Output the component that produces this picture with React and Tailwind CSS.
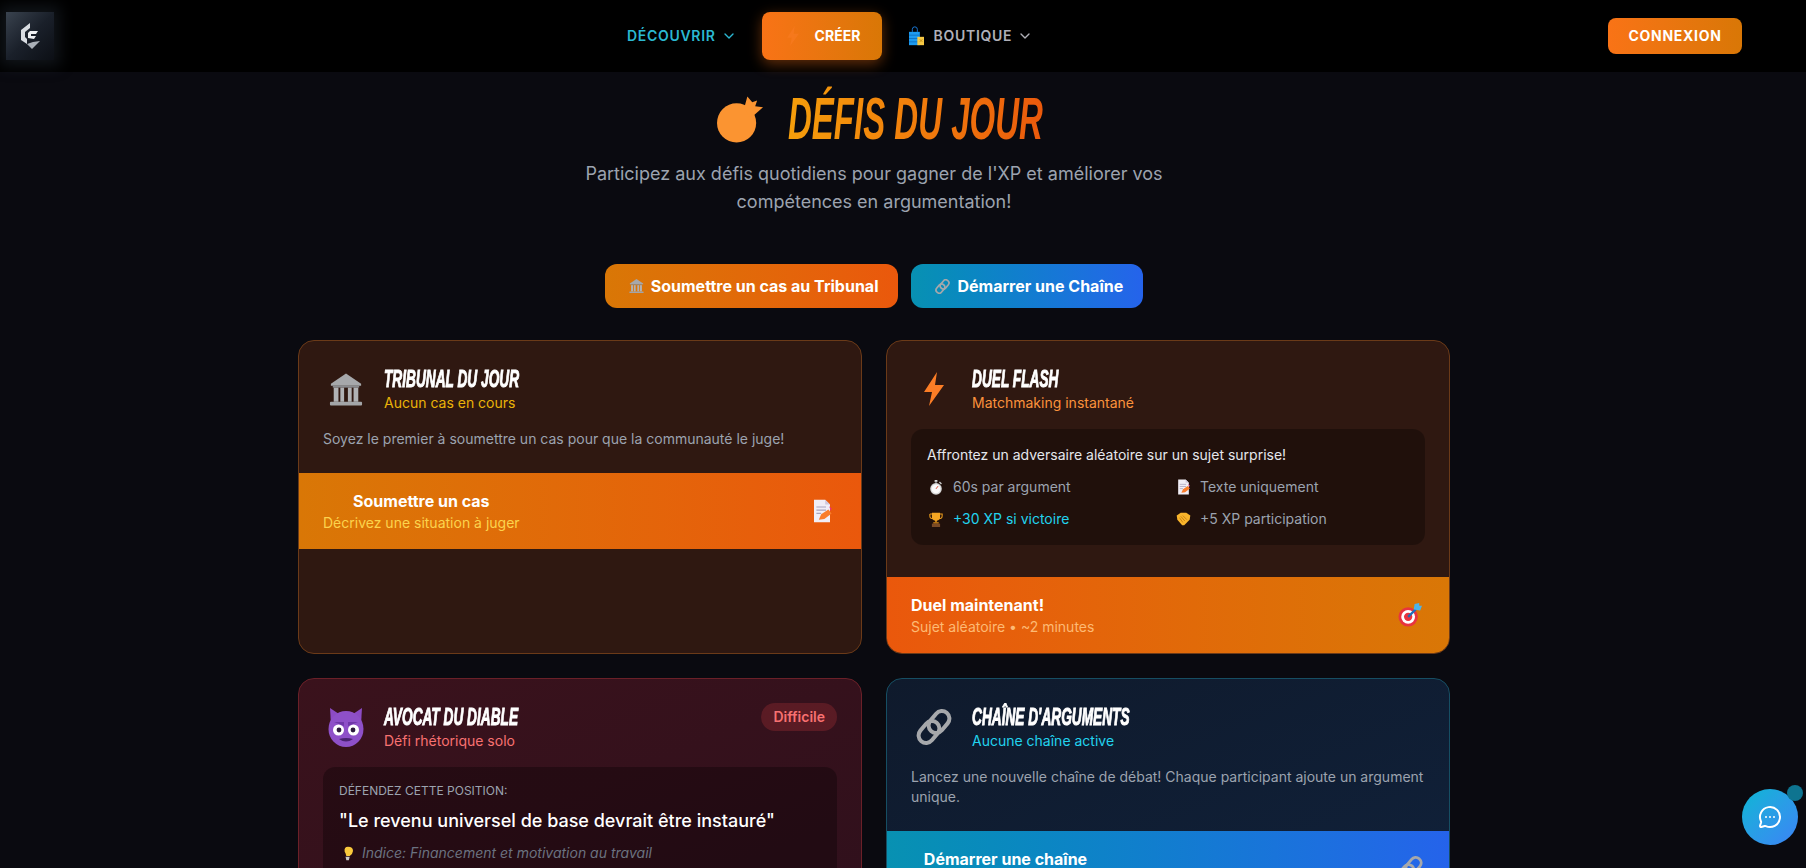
import React from 'react';
import { ChevronDown, MessageCircleMore } from 'lucide-react';

// emoji drawings
const Bolt = ({ className }) => (
  <svg viewBox="0 0 24 36" className={className}>
    <path d="M15 1 L2 21 L10 21 L7 35 L22 14 L13 14 Z" fill="#fb7d26" />
  </svg>
);

const Building = ({ className }) => (
  <svg viewBox="0 0 36 36" className={className}>
    <path d="M18 1 L34 12 L34 14 L2 14 L2 12 Z" fill="#a6a8ab" />
    <rect x="4" y="14" width="28" height="2" fill="#8a8c90" />
    <rect x="5" y="16" width="5" height="15" fill="#b0b2b5" />
    <rect x="12" y="16" width="4" height="15" fill="#b0b2b5" />
    <rect x="20" y="16" width="4" height="15" fill="#b0b2b5" />
    <rect x="26" y="16" width="5" height="15" fill="#b0b2b5" />
    <rect x="1" y="31" width="34" height="4" rx="1" fill="#a3a5a8" />
  </svg>
);

const Memo = ({ className }) => (
  <svg viewBox="0 0 24 30" className={className}>
    <path d="M2 1 H16 L22 7 V29 H2 Z" fill="#f1eef6" />
    <path d="M16 1 L22 7 H16 Z" fill="#cfc8dc" />
    <path d="M5 10 H17 M5 14 H17 M5 18 H11" stroke="#a9a3bd" strokeWidth="1.5" />
    <path d="M8 26 L11 19 L20 13 L24 18 L15 25 Z" fill="#f97c2b" />
    <path d="M21 9 L24 12 L23 15 Z" fill="#ec2f7b" />
  </svg>
);

const Bag = ({ className }) => (
  <svg viewBox="0 0 20 24" className={className}>
    <path d="M5 7 V4 Q5 1 8 1 Q11 1 11 4 V7" fill="none" stroke="#1976d2" strokeWidth="1.2" />
    <rect x="1" y="7" width="13" height="16" fill="#1d9bf0" />
    <path d="M1 11 H14 M1 15 H14 M1 19 H14" stroke="#0d6ebd" strokeWidth="1" />
    <rect x="11" y="13" width="8" height="10" fill="#f6c945" />
    <path d="M14 16 L17 19 M17 16 L14 19" stroke="#b98612" strokeWidth="1" />
  </svg>
);

const Stopwatch = ({ className }) => (
  <svg viewBox="0 0 20 22" className={className}>
    <rect x="8" y="0" width="4" height="3" fill="#d8d8d8" />
    <rect x="9" y="2" width="2" height="3" fill="#8f8f8f" />
    <circle cx="10" cy="13" r="8.5" fill="#d9d9d9" />
    <circle cx="10" cy="13" r="6.5" fill="#fafafa" />
    <path d="M10 13 L13 9" stroke="#d9432f" strokeWidth="1.4" />
    <path d="M15 3 L18 6" stroke="#c9c9c9" strokeWidth="2" />
  </svg>
);

const Trophy = ({ className }) => (
  <svg viewBox="0 0 20 22" className={className}>
    <path d="M1 3 H19 V6 Q19 10 14 10 M1 3 V6 Q1 10 6 10" fill="none" stroke="#e99a1c" strokeWidth="1.6" />
    <path d="M4 1 H16 V7 Q16 12 11 13 V15 H9 V13 Q4 12 4 7 Z" fill="#f5a623" />
    <rect x="6" y="15" width="8" height="2" fill="#d98a14" />
    <rect x="4" y="17" width="12" height="5" fill="#7a4a25" />
  </svg>
);

const Handshake = ({ className }) => (
  <svg viewBox="0 0 22 20" className={className}>
    <path d="M1 5 L7 1 H15 L21 5 L20 11 L12 19 H9 L2 11 Z" fill="#f9b52c" />
    <path d="M7 6 L13 13 M10 5 L16 11 M5 8 L10 15" stroke="#c97f10" strokeWidth="1.3" />
  </svg>
);

const Target = ({ className }) => (
  <svg viewBox="0 0 26 26" className={className}>
    <circle cx="11" cy="15" r="10.5" fill="#e8343f" />
    <circle cx="11" cy="15" r="7.5" fill="#fff" />
    <circle cx="11" cy="15" r="4.5" fill="#e8343f" />
    <path d="M11 15 L21 5" stroke="#1e6fb8" strokeWidth="2.4" />
    <path d="M17 7 L18 1 L23 0 L23 3 L26 3 L24 8 Z" fill="#4db3e8" />
  </svg>
);

const Devil = ({ className }) => (
  <svg viewBox="0 0 36 40" className={className}>
    <path d="M3 18 L2 1 L14 9 Z" fill="#8c4bc4" />
    <path d="M33 18 L34 1 L22 9 Z" fill="#8c4bc4" />
    <ellipse cx="18" cy="22" rx="17.5" ry="18" fill="#8e50c8" />
    <path d="M6 15 L16 19 L16 15 Z M30 15 L20 19 L20 15 Z" fill="#6f37a8" />
    <circle cx="10.5" cy="23" r="5.5" fill="#fff" />
    <circle cx="25.5" cy="23" r="5.5" fill="#fff" />
    <circle cx="11" cy="23" r="2.4" fill="#2c1a3e" />
    <circle cx="25" cy="23" r="2.4" fill="#2c1a3e" />
    <path d="M11 32 Q18 37 25 32 Q18 30 11 32 Z" fill="#4b2372" />
  </svg>
);

const LinkIcon = ({ className }) => (
  <svg viewBox="0 0 36 36" className={className} fill="none" stroke="#a6a8ab" strokeWidth="4">
    <rect x="-7.5" y="-12" width="15" height="24" rx="7.5" transform="translate(23 13) rotate(40)" />
    <rect x="-7.5" y="-12" width="15" height="24" rx="7.5" transform="translate(13 23) rotate(40)" />
  </svg>
);

const Bulb = ({ className }) => (
  <svg viewBox="0 0 14 18" className={className}>
    <path d="M7 1 Q13 1 13 6 Q13 9 9 12 L5 12 Q4 8 3 7 Q2 1 7 1 Z" fill="#f9c93c" />
    <path d="M4 13 L9 13 L8 17 L5 17 Z" fill="#c9c9c9" />
  </svg>
);

const Bomb = ({ className }) => (
  <svg viewBox="0 0 48 48" className={className}>
    <circle cx="20" cy="28" r="20" fill="#fb9431" />
    <path d="M28 12 L31 1 L36 7 L41 5 L39 11 L47 12 L38 20 L33 22 Z" fill="#fb9431" />
  </svg>
);

const Logo = () => (
  <div className="w-12 h-12 bg-gradient-to-br from-[#3a434f] via-[#1a202a] to-[#0c0f15] shadow-[0_0_14px_6px_rgba(50,60,75,0.35)] flex items-center justify-center">
    <svg viewBox="0 0 24 28" className="w-[24px] h-[28px]">
      <path d="M12 1 L3 8 V18 L9 22 L9 17 L7 15 V10 L12 6 Z" fill="#d9dde2" />
      <path d="M12 9 L20 9 L18 12 L13 12 L13 14 L18 14 L16 17 L10 16 V11 Z" fill="#eef0f2" />
      <path d="M9 22 L14 27 L22 19 L15 20 Z" fill="#aab0b8" />
    </svg>
  </div>
);

const CardTitle = ({ children }) => (
  <h3 className="font-['Liberation_Sans',sans-serif] font-bold italic uppercase text-[24px] leading-[28px] text-white [-webkit-text-stroke:1px_white] whitespace-nowrap origin-left scale-x-[0.57]">
    {children}
  </h3>
);

const CardHeader = ({ icon, title, subtitle, subColor, badge }) => (
  <div className="flex items-center gap-4 mb-4">
    <div className="w-[45px] h-[48px] flex items-center justify-center shrink-0">{icon}</div>
    <div className="flex-1">
      <CardTitle>{title}</CardTitle>
      <p className={`text-sm leading-5 ${subColor}`}>{subtitle}</p>
    </div>
    {badge}
  </div>
);

const CtaBar = ({ title, subtitle, subColor = '', gradient, icon, center }) => (
  <div className={`flex items-center justify-between px-6 py-4 h-[76px] shrink-0 ${gradient}`}>
    <div className={center ? 'text-center min-w-[189px]' : ''}>
      <div className="text-base leading-6 font-bold text-white">{title}</div>
      <div className={`text-sm leading-5 min-h-5 whitespace-nowrap ${subColor}`}>{subtitle}</div>
    </div>
    <div className="w-[30px] flex justify-center">{icon}</div>
  </div>
);

const Stat = ({ icon, text, color = 'text-[#9ca3af]' }) => (
  <div className="flex items-center gap-2 text-sm leading-5">
    <span className="w-[18px] flex justify-center">{icon}</span>
    <span className={color}>{text}</span>
  </div>
);

export default function App() {
  return (
    <div className="h-[868px] overflow-hidden relative bg-[#0a0a10] font-['Inter',sans-serif]">
      {/* NAV */}
      <nav className="h-[72px] bg-black flex items-center pl-[6px]">
        <Logo />
        <div className="ml-[573px] flex items-center text-sm font-semibold tracking-wider">
          <span className="text-[#2bb8d2]">DÉCOUVRIR</span>
          <ChevronDown size={16} className="text-[#2bb8d2] ml-[5px]" />
          <button className="ml-[25px] w-[120px] h-12 rounded-lg bg-gradient-to-r from-[#f97316] to-[#d97706] shadow-[0_4px_14px_rgba(249,115,22,0.4)] flex items-center pl-6 text-white font-bold tracking-normal">
            <Bolt className="w-[14px] h-[22px] opacity-50" />
            <span className="ml-[15px]">CRÉER</span>
          </button>
          <Bag className="ml-[26px] w-[17px] h-[20px]" />
          <span className="ml-[9px] text-[#b0b0b8]">BOUTIQUE</span>
          <ChevronDown size={16} className="text-[#b0b0b8] ml-[5px]" />
        </div>
        <button className="ml-auto mr-[64px] w-[134px] h-9 rounded-lg bg-gradient-to-r from-[#f97316] to-[#d97706] text-white text-sm font-bold tracking-wider">
          CONNEXION
        </button>
      </nav>

      {/* content column sits left of the page centre */}
      <div className="pr-[58px]">
        <div className="flex justify-center items-center gap-[24px] mt-[23px] h-[48px] pl-[10px]">
          <Bomb className="w-[47px] h-[48px]" />
          <div className="w-[254px]">
            <h1 className="w-max whitespace-nowrap origin-left scale-x-[0.55] font-['Liberation_Sans',sans-serif] font-bold italic text-[60px] leading-[72px] pr-2 bg-gradient-to-r from-[#f59e0b] to-[#ea580c] bg-clip-text text-transparent">
              DÉFIS DU JOUR
            </h1>
          </div>
        </div>
        <p className="mt-[17px] mx-auto w-[640px] text-center text-lg leading-[28px] text-[#9ca3af]">
          Participez aux défis quotidiens pour gagner de l'XP et améliorer vos compétences en argumentation!
        </p>

        <div className="mt-[48px] flex justify-center gap-[13px]">
          <button className="h-11 pl-6 pr-5 rounded-xl bg-gradient-to-r from-[#d97706] to-[#ea580c] text-white font-bold flex items-center gap-[7px]">
            <Building className="w-[15px] h-[16px]" />
            Soumettre un cas au Tribunal
          </button>
          <button className="h-11 pl-6 pr-5 rounded-xl bg-gradient-to-r from-[#0891b2] to-[#2563eb] text-white font-bold flex items-center gap-[7px]">
            <LinkIcon className="w-[15px] h-[15px]" />
            Démarrer une Chaîne
          </button>
        </div>

        {/* CARDS */}
        <div className="mt-8 mx-auto w-[1152px] grid grid-cols-2 gap-6 auto-rows-min">
          <div className="h-[314px] rounded-2xl border border-[#6b3a18] bg-[#2f1811] overflow-hidden flex flex-col">
            <div className="px-6 pt-6 pb-6">
              <CardHeader
                icon={<Building className="w-[34px] h-[35px]" />}
                title="Tribunal du jour"
                subtitle="Aucun cas en cours"
                subColor="text-[#eab308]"
              />
              <p className="text-sm leading-5 text-[#9ca3af]">
                Soyez le premier à soumettre un cas pour que la communauté le juge!
              </p>
            </div>
            <CtaBar
              center
              title="Soumettre un cas"
              subtitle="Décrivez une situation à juger"
              subColor="text-[#fcd34d]"
              gradient="bg-gradient-to-r from-[#d97706] to-[#ea580c]"
              icon={<Memo className="w-[20px] h-[24px]" />}
            />
          </div>

          <div className="h-[314px] rounded-2xl border border-[#6b3a18] bg-[#2f1811] overflow-hidden flex flex-col">
            <div className="px-6 pt-6 flex-1">
              <CardHeader
                icon={<Bolt className="w-[24px] h-[36px]" />}
                title="Duel flash"
                subtitle="Matchmaking instantané"
                subColor="text-[#fb923c]"
              />
              <div className="rounded-xl bg-black/30 p-4">
                <p className="text-sm leading-5 text-[#e5e7eb] mb-3">Affrontez un adversaire aléatoire sur un sujet surprise!</p>
                <div className="grid grid-cols-2 gap-3">
                  <Stat icon={<Stopwatch className="w-[14px] h-[15px]" />} text="60s par argument" />
                  <Stat icon={<Memo className="w-[13px] h-[16px]" />} text="Texte uniquement" />
                  <Stat icon={<Trophy className="w-[14px] h-[15px]" />} text="+30 XP si victoire" color="text-[#22d3ee]" />
                  <Stat icon={<Handshake className="w-[15px] h-[14px]" />} text="+5 XP participation" />
                </div>
              </div>
            </div>
            <CtaBar
              title="Duel maintenant!"
              subtitle="Sujet aléatoire • ~2 minutes"
              subColor="text-[#fdba74]"
              gradient="bg-gradient-to-r from-[#ea580c] to-[#d97706]"
              icon={<Target className="w-[24px] h-[24px]" />}
            />
          </div>

          <div className="rounded-2xl border border-[#6b2028] bg-gradient-to-br from-[#3a121c] to-[#30101c] overflow-hidden">
            <div className="px-6 pt-6 pb-6">
              <CardHeader
                icon={<Devil className="w-[36px] h-[40px]" />}
                title="Avocat du diable"
                subtitle="Défi rhétorique solo"
                subColor="text-[#f87171]"
                badge={
                  <span className="self-start px-3 py-1 rounded-full bg-[#ef4444]/20 text-[#f87171] text-sm leading-5 font-semibold">
                    Difficile
                  </span>
                }
              />
              <div className="rounded-xl bg-black/30 p-4">
                <p className="text-xs leading-4 text-[#9ca3af] uppercase mb-2">Défendez cette position:</p>
                <p className="text-lg leading-7 font-medium text-white mb-2">"Le revenu universel de base devrait être instauré"</p>
                <div className="flex items-center gap-[8px] text-sm leading-5 italic text-[#6b7280] pl-[3px]">
                  <Bulb className="w-[12px] h-[15px]" />
                  Indice: Financement et motivation au travail
                </div>
              </div>
            </div>
          </div>

          <div className="rounded-2xl border border-[#164e63] bg-gradient-to-br from-[#0f1a2c] to-[#10213a] overflow-hidden">
            <div className="px-6 pt-6 pb-6">
              <CardHeader
                icon={<LinkIcon className="w-[36px] h-[36px]" />}
                title="Chaîne d'arguments"
                subtitle="Aucune chaîne active"
                subColor="text-[#22d3ee]"
              />
              <p className="text-sm leading-5 text-[#9ca3af]">
                Lancez une nouvelle chaîne de débat! Chaque participant ajoute un argument unique.
              </p>
            </div>
            <CtaBar
              center
              title="Démarrer une chaîne"
              gradient="bg-gradient-to-r from-[#0891b2] to-[#2563eb]"
              icon={<LinkIcon className="w-[26px] h-[26px]" />}
            />
          </div>
        </div>
      </div>

      {/* chat bubble */}
      <button className="absolute right-2 bottom-[23px] w-14 h-14 rounded-full bg-gradient-to-br from-[#06b6d4] to-[#3b82f6] flex items-center justify-center text-white">
        <MessageCircleMore size={24} />
        <span className="absolute -top-1 -right-[5px] w-4 h-4 rounded-full bg-[#0e7490]" />
      </button>
    </div>
  );
}
